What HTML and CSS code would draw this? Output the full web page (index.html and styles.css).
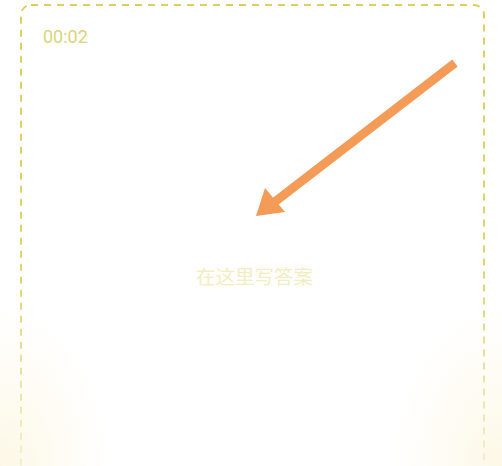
FILE: index.html
```html
<!DOCTYPE html>
<html lang="zh">
<head>
<meta charset="utf-8">
<link rel="stylesheet" href="styles.css">
</head>
<body>
<div class="page">
  <div class="board">
    <svg class="frame" width="466" height="470" viewBox="0 0 466 470" aria-hidden="true">
      <defs>
        <linearGradient id="fade" x1="0" y1="0" x2="0" y2="1">
          <stop offset="0" stop-color="#ddd060"/>
          <stop offset="0.5" stop-color="#e0d46c"/>
          <stop offset="0.9" stop-color="#f6efd0"/>
          <stop offset="1" stop-color="#fbf7e8"/>
        </linearGradient>
      </defs>
      <rect x="1" y="1" width="463" height="520" rx="10" ry="10" fill="none" stroke="url(#fade)" stroke-width="2" stroke-dasharray="7 6"/>
    </svg>
    <div class="timer">00:02</div>
    <div class="answer">在这里写答案</div>
    <svg class="arrow" width="502" height="466" viewBox="0 0 502 466" aria-hidden="true">
      <line x1="455" y1="63" x2="272" y2="204" stroke="#f49b58" stroke-width="9" stroke-linecap="butt"/>
      <polygon points="256,216 265,188 285,212" fill="#f49b58"/>
    </svg>
  </div>
</div>
</body>
</html>
```
FILE: styles.css
```css
html, body {
  margin: 0;
  padding: 0;
  background: #ffffff;
  overflow: hidden;
}
.page {
  width: 502px;
  height: 466px;
  overflow: hidden;
  background:
    radial-gradient(ellipse 110px 160px at 0% 100%, #fdf8e6 0%, rgba(255,255,255,0) 100%),
    radial-gradient(ellipse 110px 160px at 100% 100%, #fdf8e6 0%, rgba(255,255,255,0) 100%),
    #ffffff;
  position: relative;
}
.board {
  margin: 5px 0 0 21px;
  width: 465px;
  height: 520px;
  box-sizing: border-box;
  padding: 22px 0 0 22px;
  display: flex;
  flex-direction: column;
}
.frame {
  position: absolute;
  left: 20px;
  top: 4px;
}
.arrow {
  position: absolute;
  left: 0;
  top: 0;
}
.timer {
  font-family: Roboto, "Liberation Sans", sans-serif;
  font-size: 18px;
  line-height: 20px;
  color: #dcd47a;
}
.answer {
  margin-top: 218px;
  margin-left: -22px;
  text-align: center;
  font-family: "Noto Sans CJK SC", "Noto Sans", sans-serif;
  font-size: 19.5px;
  line-height: 22px;
  color: #f3edc2;
  padding-left: 2px;
}
```
